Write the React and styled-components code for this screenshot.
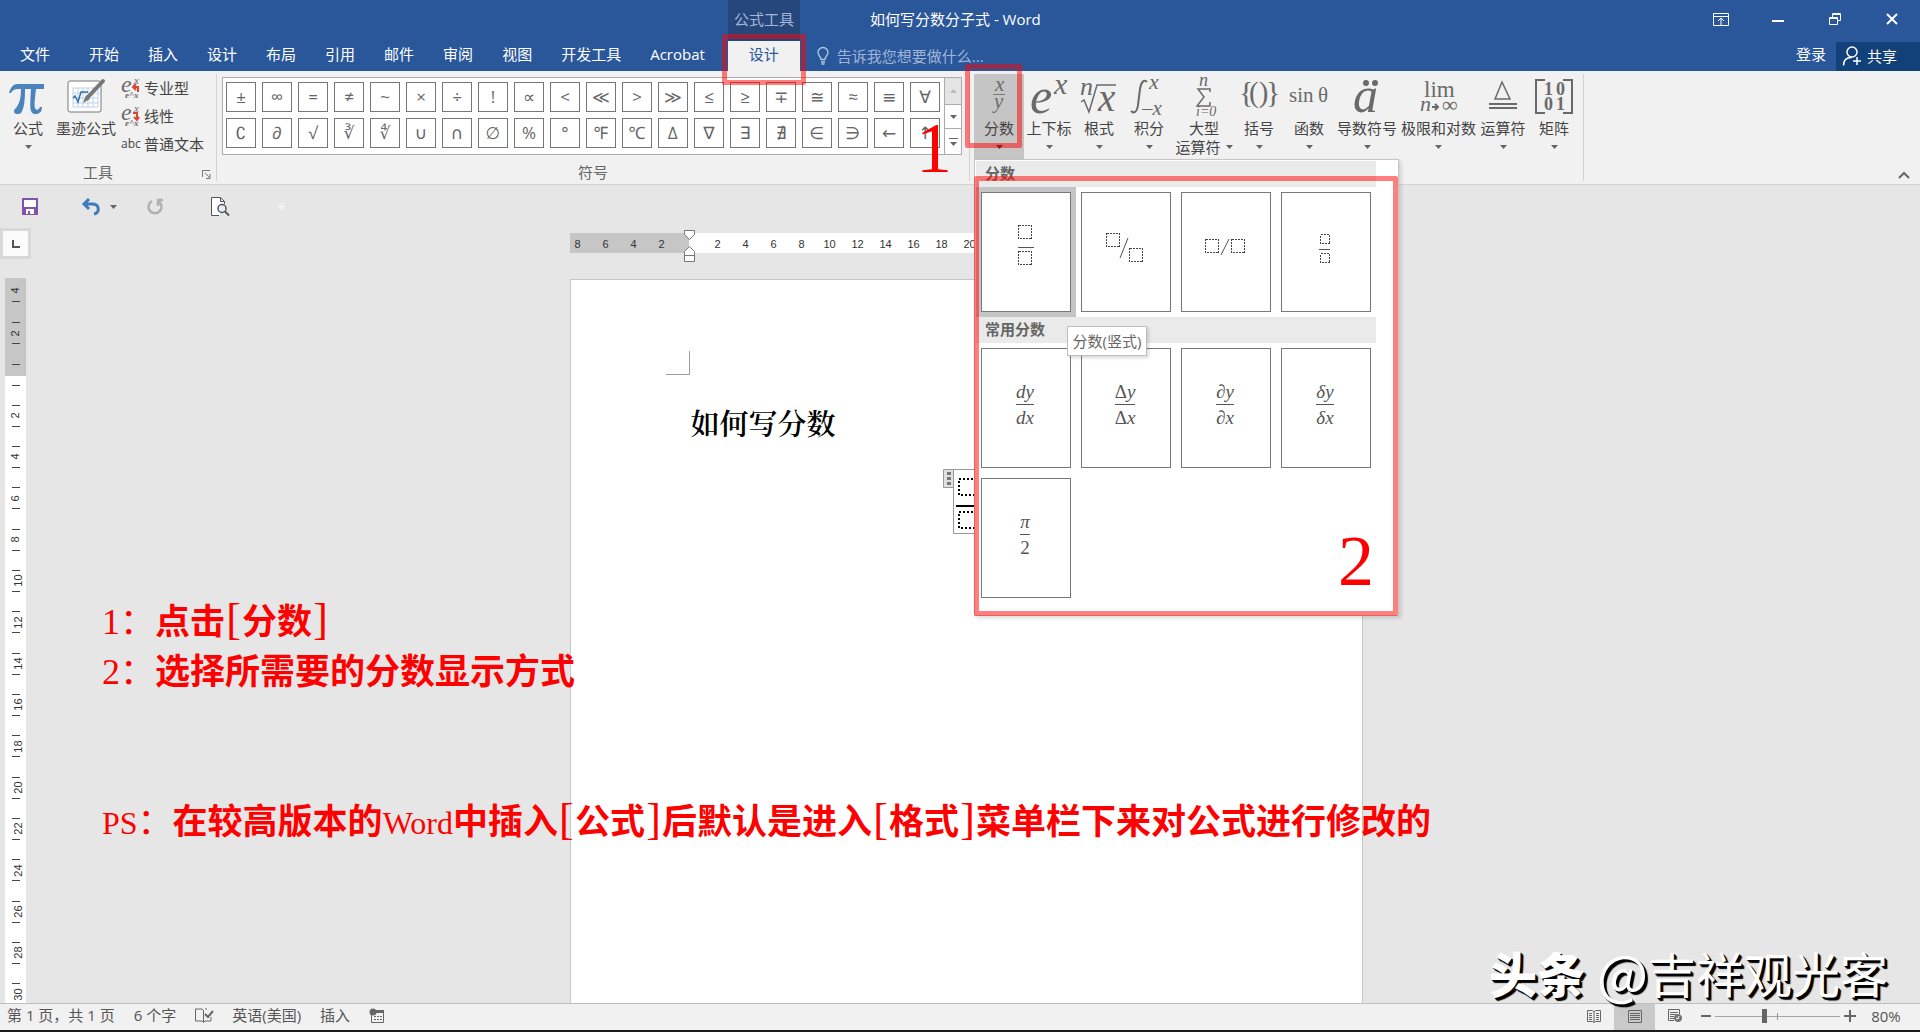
import React from "react";
import styled, { createGlobalStyle, css } from "styled-components";

const UI = `"Open Sans", "Noto Sans CJK SC", sans-serif`;
const MATH = `"Liberation Serif", "DejaVu Serif", serif`;

const Global = createGlobalStyle`
  * { box-sizing: border-box; }
  body { margin: 0; background: #e6e6e6; font: 15px/20px ${UI}; color: #444; }
  button, input { font: inherit; color: inherit; }
  button { border: 0; padding: 0; background: none; }
  svg { display: block; flex: none; overflow: visible; }
`;

const App = styled.div`
  position: relative;
  display: flex;
  flex-direction: column;
  height: 100vh;
  overflow: hidden;
`;

/* ---------- title bar and tabs ---------- */
const Header = styled.header`
  display: grid;
  grid-template-rows: 41px 30px;
  background: #2a579a;
  color: #fff;
`;
const TitleRow = styled.div`
  display: flex;
  align-items: flex-start;
`;
const ContextTitle = styled.div`
  width: 72px;
  height: 41px;
  margin-left: 728px;
  line-height: 39px;
  text-align: center;
  white-space: nowrap;
  background: #26477c;
  color: #a3b8da;
`;
const DocTitle = styled.h1`
  margin: 0 auto 0 70px;
  font-size: 15px;
  line-height: 38px;
  font-weight: 400;
`;
const WindowButtons = styled.div`
  display: flex;
`;
const WindowButton = styled.button`
  display: grid;
  place-items: center;
  width: 57px;
  height: 38px;
`;
const TabRow = styled.nav`
  display: flex;
  align-items: center;
`;
const Tab = styled.button`
  padding: 0 15px 4px 14px;
  white-space: nowrap;
  line-height: 26px;
`;
const FileTab = styled(Tab)`
  padding-left: 20px;
  padding-right: 25px;
`;
const ActiveTab = styled(Tab)`
  position: relative;
  width: 72px;
  height: 30px;
  margin-left: 8px;
  padding: 0 0 4px;
  background: #f1f1f1;
  color: #2a579a;
`;
const TellMe = styled.label`
  display: flex;
  flex: 1;
  align-items: center;
  gap: 8px;
  margin-left: 17px;
  input {
    width: 200px;
    padding: 0;
    border: 0;
    background: none;
    line-height: 28px;
  }
  input::placeholder { color: #9fb5d8; opacity: 1; }
`;
const Share = styled.button`
  display: flex;
  align-items: center;
  gap: 5px;
  width: 84px;
  height: 29px;
  padding-left: 6px;
  background: #124078;
`;
const SignIn = styled(Tab)`
  padding-right: 10px;
`;

const RedFrame = styled.span`
  position: absolute;
  z-index: 5;
  inset: ${(p) => p.$inset};
  border: 5px solid rgba(255, 0, 0, 0.5);
  border-radius: 2px;
  pointer-events: none;
`;

/* ---------- ribbon ---------- */
const Ribbon = styled.section`
  position: relative;
  z-index: 2;
  display: flex;
  height: 114px;
  padding-top: 3px;
  background: #f1f1f1;
  border-bottom: 1px solid #d2d2d2;
`;
const Group = styled.div`
  position: relative;
  display: flex;
  flex-direction: column;
  justify-content: space-between;
  height: 107px;
  border-right: 1px solid #d2d2d2;
  width: ${(p) => p.$w}px;
`;
const GroupBody = styled.div`
  display: flex;
`;
const GroupName = styled.div`
  text-align: center;
  line-height: 18px;
  color: #666;
  padding-right: ${(p) => p.$shift || 0}px;
`;
const Launcher = styled.button`
  position: absolute;
  right: 5px;
  bottom: 2px;
`;
const BigButton = styled.button`
  position: relative;
  display: flex;
  flex-direction: column;
  align-items: center;
  flex: none;
  width: ${(p) => p.$w}px;
  height: 85px;
  padding-top: 4px;
  white-space: nowrap;
  line-height: 18px;
  ${(p) => p.$on && css`background: #c5c5c5;`}
  > svg:first-child { margin-bottom: 3px; }
`;
const CaretRow = styled.span`
  display: flex;
  align-items: center;
  gap: 5px;
  height: 18px;
  margin-top: 1px;
`;
const SmallColumn = styled.div`
  display: flex;
  flex-direction: column;
  padding-left: 5px;
`;
const SmallButton = styled.button`
  display: flex;
  align-items: center;
  gap: 3px;
  height: 28px;
  padding-bottom: 1px;
  white-space: nowrap;
`;
const Abc = styled.span`
  width: 20px;
  font-size: 12px;
`;
const Gallery = styled.div`
  display: flex;
  width: 740px;
  height: 78px;
  margin: 3px 0 0 5px;
  background: #fff;
  border: 1px solid #ababab;
`;
const SymbolGrid = styled.div`
  display: grid;
  grid-template-columns: repeat(20, 30px);
  grid-auto-rows: 30px;
  gap: 6px;
  padding: 4px 3px;
`;
const SymbolButton = styled.button`
  border: 1px solid #777;
  font: 17px/26px "Open Sans", "Noto Sans", "DejaVu Sans", sans-serif;
  color: #666;
`;
const GalleryScroll = styled.div`
  display: grid;
  grid-template-rows: 1fr 24px 1fr;
  flex: 1;
  margin-left: 1px;
  border-left: 1px solid #ababab;
`;
const ScrollButton = styled.button`
  display: grid;
  place-items: center;
  background: ${(p) => (p.$off ? "#e4e4e4" : "#fff")};
  & + & { border-top: 1px solid #ababab; }
`;
const Structures = styled(GroupBody)`
  padding-left: 4px;
`;
const MenuAnchor = styled.div`
  position: relative;
`;
const Collapse = styled.button`
  margin: auto 10px 5px auto;
`;

/* ---------- fraction menu ---------- */
const Menu = styled.div`
  position: absolute;
  z-index: 3;
  top: 85px;
  left: 0;
  width: 425px;
  height: 457px;
  padding: 1px;
  background: #fff;
  border: 1px solid #c6c6c6;
  box-shadow: 2px 2px 4px rgba(0, 0, 0, 0.15);
`;
const MenuHeading = styled.h2`
  width: 400px;
  margin: 0;
  padding: 0 0 2px 9px;
  background: #eaeaea;
  font-size: 15px;
  line-height: 24px;
  font-weight: 700;
  color: #666;
`;
const MenuGrid = styled.div`
  display: grid;
  grid-template-columns: repeat(4, 100px);
  grid-auto-rows: 130px;
`;
const MenuCell = styled.button`
  padding: 5px;
  background: ${(p) => (p.$on ? "#c5c5c5" : "none")};
`;
const Card = styled.span`
  display: flex;
  align-items: center;
  justify-content: center;
  width: 90px;
  height: 120px;
  padding: ${(p) => (p.$text ? "0 2px 8px 0" : 0)};
  background: #fff;
  border: 1px solid #777;
`;
const Fraction = styled.span`
  display: flex;
  flex-direction: column;
  font: italic 19px/25px ${MATH};
  color: #555;
  text-align: center;
  > span + span { border-top: 1px solid #555; }
`;
const Upright = styled.span`
  font-style: normal;
`;
const Tooltip = styled.div`
  position: absolute;
  top: 166px;
  left: 92px;
  width: 80px;
  height: 30px;
  line-height: 29px;
  text-align: center;
  white-space: nowrap;
  background: #fff;
  border: 1px solid #bebebe;
  box-shadow: 2px 2px 3px rgba(0, 0, 0, 0.15);
  color: #666;
`;
const BigDigit = styled.span`
  position: absolute;
  z-index: 6;
  font: 72px/72px ${MATH};
  color: #f00;
  pointer-events: none;
`;
const StepOne = styled(BigDigit)`
  right: 17px;
  top: 38px;
`;
const StepTwo = styled(BigDigit)`
  right: 24px;
  bottom: 18px;
`;

/* ---------- work area ---------- */
const QuickAccess = styled.div`
  display: flex;
  align-items: center;
  height: 43px;
  padding-left: 21px;
`;
const QuickButton = styled.button`
  display: flex;
  align-items: center;
  gap: 9px;
  margin-right: ${(p) => p.$gap}px;
`;
const RulerRow = styled.div`
  display: flex;
  align-items: flex-start;
  height: 50px;
`;
const TabSelector = styled.button`
  display: grid;
  place-items: center;
  width: 31px;
  height: 31px;
  background: #fbfbfb;
  border: 3px solid #d9d9d9;
`;
const Centered = styled.div`
  flex: 1;
  display: flex;
  justify-content: center;
  padding-right: 19px;
`;
const HRuler = styled.div`
  position: relative;
  display: flex;
  width: 793px;
  height: 20px;
  margin-top: 5px;
  background: #fff;
  font: 11px/22px "Liberation Sans", sans-serif;
  color: #333;
`;
const RulerMargin = styled.div`
  display: flex;
  justify-content: flex-end;
  width: 119px;
  padding-right: 13px;
  overflow: hidden;
  background: #c6c6c6;
`;
const RulerText = styled.div`
  display: flex;
  padding-left: 15px;
`;
const RulerNumber = styled.span`
  flex: none;
  width: 28px;
  text-align: center;
`;
const IndentMarks = styled.svg`
  position: absolute;
  top: -3px;
  left: 114px;
`;
const Body = styled.main`
  flex: 1;
  display: flex;
  min-height: 0;
  overflow: hidden;
`;
const VRuler = styled.div`
  flex: none;
  width: 21px;
  margin: 0 5px;
  background: #fff;
  overflow: hidden;
  font: 11px/11px "Liberation Sans", sans-serif;
  color: #333;
`;
const VMargin = styled.div`
  display: flex;
  flex-direction: column;
  align-items: center;
  gap: 20px;
  height: 98px;
  padding-top: 2px;
  background: #c6c6c6;
`;
const VTick = styled.div`
  width: 8px;
  height: 1px;
  background: #444;
`;
const VOrigin = styled.div`
  display: flex;
  justify-content: center;
  padding: 9px 0;
`;
const VScale = styled.div`
  display: grid;
  grid-template-rows: repeat(15, 1fr);
  place-items: center;
  height: 620px;
`;
const VMark = styled.div`
  display: grid;
  place-items: center;
  width: 8px;
  height: 22px;
  border: solid #444;
  border-width: ${(p) => (p.$open ? "0 0 1px" : "1px 0")};
  span { transform: rotate(-90deg); }
`;
const Page = styled.article`
  position: relative;
  width: 793px;
  margin-top: 1px;
  padding: 125px 120px 0 120px;
  background: #fff;
  border: 1px solid #c6c6c6;
  border-bottom: 0;
`;
const PageTitle = styled.h2`
  margin: 0;
  font: 600 29px/36px "Noto Serif CJK SC", "Noto Sans CJK SC", serif;
  color: #000;
`;
const MarginCorner = styled.div`
  position: absolute;
  top: 71px;
  left: 95px;
  width: 24px;
  height: 24px;
  border: solid #a0a0a0;
  border-width: 0 1px 1px 0;
`;
const Equation = styled.div`
  display: flex;
  justify-content: center;
  margin-top: 28px;
  padding-left: 3px;
`;

/* ---------- notes ---------- */
const Notes = styled.div`
  position: absolute;
  z-index: 1;
  top: 594px;
  left: 102px;
  font: 700 35px/50px "Noto Sans CJK SC", sans-serif;
  color: #f00;
  white-space: nowrap;
  p { margin: 0; height: 50px; }
  p:last-child { margin-top: 100px; }
`;
const Digit = styled.span`
  font: 400 36px/50px "Liberation Serif", serif;
`;
const Latin = styled.span`
  font: 400 32px/50px "Liberation Serif", serif;
`;
const Colon = styled.span`
  font-weight: 400;
`;
const Bracket = styled.span`
  display: inline-block;
  width: 17px;
  font: 400 44px/50px "Liberation Serif", serif;
  text-align: center;
`;
const Watermark = styled.div`
  position: absolute;
  z-index: 4;
  right: 32px;
  bottom: 32px;
  display: flex;
  font: 400 48px/56px "Noto Sans CJK SC", sans-serif;
  color: #fff;
  text-shadow: 1px 1px 0 #000, 2px 2px 0 #000, 3px 3px 1px #000;
  b { margin-right: 12px; font-weight: 900; }
`;
const AtSign = styled.span`
  font-size: 54px;
`;

/* ---------- status bar ---------- */
const Status = styled.footer`
  display: flex;
  align-items: center;
  height: 29px;
  padding-left: 7px;
  background: #f1f1f1;
  border-top: 1px solid #bdbdbd;
  border-bottom: 2px solid #1d1a1e;
  color: #555;
  white-space: nowrap;
`;
const StatusItem = styled.button`
  margin-right: 19px;
  padding-bottom: 3px;
  line-height: 23px;
`;
const ViewButton = styled.button`
  display: grid;
  place-items: center;
  width: 41px;
  height: 26px;
  padding-bottom: 2px;
  background: ${(p) => (p.$on ? "#c9c9c9" : "none")};
`;
const Spacer = styled.span`
  flex: 1;
`;
const ZoomControl = styled.div`
  display: flex;
  align-items: center;
  margin-left: 5px;
  padding-bottom: 2px;
`;
const ZoomSlider = styled.input`
  appearance: none;
  width: 125px;
  height: 14px;
  margin: 0 4px;
  background:
    linear-gradient(#999, #999) 62px 4px / 1px 7px no-repeat,
    linear-gradient(#a6a6a6, #a6a6a6) 0 7px / 100% 1px no-repeat;
  &::-webkit-slider-thumb {
    appearance: none;
    width: 5px;
    height: 14px;
    background: #666;
  }
`;
const ZoomValue = styled.button`
  width: 64px;
  padding-right: 4px;
  text-align: center;
`;

const Caret = ({ c = "#666" }) => (
  <svg width="7" height="4" viewBox="0 0 7 4"><path d="M0 0h7L3.500 4z" fill={c} /></svg>
);

const T = ({ x, y, s, children, up, b }) => (
  <text x={x} y={y} fontSize={s} fontFamily={MATH} fontStyle={up ? "normal" : "italic"} fontWeight={b ? 700 : 400} fill="#6a6a6a">
    {children}
  </text>
);
const Icon = ({ w = 40, children }) => (
  <svg width={w} height="38" viewBox={`0 0 ${w} 38`}>{children}</svg>
);

const structureIcons = {
  frac: <Icon><T x="16" y="13" s="21">x</T><path d="M14 16.500h12" stroke="#777" /><T x="15" y="30" s="21">y</T></Icon>,
  script: <Icon w={48}><T x="5" y="35" s="50">e</T><T x="29" y="16" s="30">x</T></Icon>,
  root: <Icon w={44}><T x="3" y="17" s="26">n</T><path d="M4 24l3-2 5 12L20 7h19" fill="none" stroke="#6a6a6a" strokeWidth="1.500" /><T x="21" y="33" s="39">x</T></Icon>,
  integral: <Icon><path d="M18 4c-3-3-6 0-7 7l-2 16c-1 7-4 9-7 6" fill="none" stroke="#6a6a6a" strokeWidth="2" /><T x="20" y="11" s="22">x</T><T x="13" y="37" s="21">–x</T></Icon>,
  sum: <Icon><T x="15" y="8" s="18">n</T><path d="M26 14v-3H14l6 8-7 9h13v-4" fill="none" stroke="#6a6a6a" strokeWidth="1.500" /><T x="12" y="38" s="14">i=0</T></Icon>,
  bracket: <Icon w={44}><T x="2" y="24" s="30" up>{"{"}</T><T x="12" y="24" s="29" up>()</T><T x="29" y="24" s="30" up>{"}"}</T></Icon>,
  func: <Icon w={44}><T x="2" y="24" s="21" up>sin</T><T x="31" y="24" s="21" up>θ</T></Icon>,
  accent: <Icon><T x="6" y="34" s="50">a</T><circle cx="19" cy="5" r="3" fill="#6a6a6a" /><circle cx="28" cy="5" r="3" fill="#6a6a6a" /></Icon>,
  limit: <Icon><T x="5" y="19" s="23" up>lim</T><T x="1" y="33" s="22">n</T><path d="M13 29h6M16 26l3 3-3 3" fill="none" stroke="#6a6a6a" strokeWidth="2" /><T x="23" y="34" s="22" up>∞</T></Icon>,
  operator: <Icon><path d="M12 21L19 4l8 17z" fill="none" stroke="#6a6a6a" strokeWidth="1.500" /><path d="M6 26h28M6 30h28" stroke="#6a6a6a" strokeWidth="2" /></Icon>,
  matrix: <Icon><path d="M11 2H2v33h9M29 2h9v33h-9" fill="none" stroke="#6a6a6a" strokeWidth="2" /><T x="10" y="17" s="18" up b>1</T><T x="22" y="17" s="18" up b>0</T><T x="10" y="32" s="18" up b>0</T><T x="22" y="32" s="18" up b>1</T></Icon>,
};

const structures = [
  ["script", "上下标", 50], ["root", "根式", 50], ["integral", "积分", 50],
  ["sum", "大型", 60, "运算符"], ["bracket", "括号", 50], ["func", "函数", 50],
  ["accent", "导数符号", 66], ["limit", "极限和对数", 77], ["operator", "运算符", 52], ["matrix", "矩阵", 50],
];
const symbols = [..."±∞=≠~×÷!∝<≪>≫≤≥∓≅≈≡∀∁∂√∛∜∪∩∅%°℉℃∆∇∃∄∈∋←↑"];
const tabs = ["开始", "插入", "设计", "布局", "引用", "邮件", "审阅", "视图", "开发工具", "Acrobat"];

const Slot = ({ x, y, s = 13 }) => (
  <rect x={x + 0.5} y={y + 0.5} width={s} height={s} fill="none" stroke="#444" strokeDasharray="2 1" shapeRendering="crispEdges" />
);
const placeholders = [
  ["分数(竖式)", <><Slot x={36} y={32} /><path d="M36 54.500h16" stroke="#555" /><Slot x={36} y={58} /></>],
  ["分数(斜式)", <><Slot x={24} y={40} /><path d="M46 45l-8 20" stroke="#555" /><Slot x={47} y={55} /></>],
  ["分数(横式)", <><Slot x={23} y={46} /><path d="M47 46l-8 16" stroke="#555" /><Slot x={49} y={46} /></>],
  ["分数(小型)", <><Slot x={38} y={41} s={9} /><path d="M37 56.500h11" stroke="#555" /><Slot x={38} y={60} s={9} /></>],
];
const common = [
  ["dy", "dx"],
  [<><Upright>Δ</Upright>y</>, <><Upright>Δ</Upright>x</>],
  ["∂y", "∂x"],
  ["δy", "δx"],
  ["π", <Upright>2</Upright>],
];

const ConvertIcon = ({ down }) => (
  <svg width="20" height="20" viewBox="0 0 20 20">
    <T x="0" y="14" s="24">e</T>
    <T x="13" y="6" s="11">x</T>
    <T x="4" y="20" s="9" b>e^x</T>
    <path d={down ? "M12 7h4v6M13 11l3 3 2-3" : "M17 14V9h-4M15 6L12 9l3 3"} fill="none" stroke="#d8472b" strokeWidth="2" />
  </svg>
);

export default function WordWindow() {
  return (
    <App>
      <Global />
      <Header>
        <TitleRow>
          <ContextTitle>公式工具</ContextTitle>
          <DocTitle>如何写分数分子式 - Word</DocTitle>
          <WindowButtons>
            <WindowButton aria-label="功能区显示选项"><svg width="16" height="13" fill="none" stroke="#fff"><path d="M.5.500h15v12H.5zM.5 3.500h15M8 12V5.500M5 8l3-3 3 3" /></svg></WindowButton>
            <WindowButton aria-label="最小化"><svg width="12" height="8"><path d="M0 6h12" stroke="#fff" strokeWidth="2" /></svg></WindowButton>
            <WindowButton aria-label="还原"><svg width="12" height="12" fill="none" stroke="#fff"><path d="M.5 4.500h8v7h-8zM.5 5.500h8M3.500 4V.500h8v7H9M3.500 1.500h8" /></svg></WindowButton>
            <WindowButton aria-label="关闭"><svg width="12" height="12"><path d="M1 1l10 10M11 1L1 11" stroke="#fff" strokeWidth="2" /></svg></WindowButton>
          </WindowButtons>
        </TitleRow>
        <TabRow>
          <FileTab>文件</FileTab>
          {tabs.map((t) => <Tab key={t}>{t}</Tab>)}
          <ActiveTab>设计<RedFrame $inset="-7px -6px -14px -6px" /></ActiveTab>
          <TellMe>
            <svg width="12" height="18" fill="none" stroke="#b5c7e3" strokeWidth="1.300"><path d="M4 12.500c0-3-3-4-3-7a5 5 0 0 1 10 0c0 3-3 4-3 7zM4 15h4M4.500 17h3" /></svg>
            <input aria-label="告诉我" placeholder="告诉我您想要做什么..." />
          </TellMe>
          <SignIn>登录</SignIn>
          <Share>
            <svg width="20" height="20" fill="none" stroke="#fff" strokeWidth="1.500"><circle cx="10" cy="6" r="5" /><path d="M1.500 19.500c0-5 3-8 8-8M15 11v8M11 15h8" /></svg>
            共享
          </Share>
        </TabRow>
      </Header>

      <Ribbon>
        <Group $w={217}>
          <GroupBody>
            <BigButton $w={56}>
              <Icon><path d="M1 15C3 9 5 6 10 6h26v5h-8c-1 9-2 15-1 19 1 3 4 2 5-1h2c0 5-3 7-6 7-7 0-6-7-5-25h-6c0 12-1 18-3 22-1 3-3 3-5 3-3 0-4-3-2-5 4-4 6-10 6-20-5 0-8 0-10 4z" fill="#4a83bd" /></Icon>
              公式
              <CaretRow><Caret /></CaretRow>
            </BigButton>
            <BigButton $w={60}>
              <Icon><rect x="2" y="3" width="33" height="31" rx="2" fill="#fff" stroke="#777" /><path d="M7 10h25v19H7zM12 10v19M17 10v19M22 10v19M27 10v19M7 15h25M7 20h25M7 25h25" fill="none" stroke="#bcd3ea" /><path d="M7 20l2-2 3 6 3-10h7" fill="none" stroke="#2f6fb0" strokeWidth="1.500" /><path d="M37 3L22 19" stroke="#777" strokeWidth="4" strokeLinecap="round" /><path d="M20 17l4 4-7 4z" fill="#777" /></Icon>
              墨迹公式
            </BigButton>
            <SmallColumn>
              <SmallButton><ConvertIcon />专业型</SmallButton>
              <SmallButton><ConvertIcon down />线性</SmallButton>
              <SmallButton><Abc>abc</Abc>普通文本</SmallButton>
            </SmallColumn>
          </GroupBody>
          <GroupName $shift={20}>工具</GroupName>
          <Launcher aria-label="工具选项"><svg width="9" height="9" fill="none" stroke="#777"><path d="M.5 7V.500H8M3 3l5 5M8 4v4.500H4" /></svg></Launcher>
        </Group>

        <Group $w={753}>
          <Gallery>
            <SymbolGrid>
              {symbols.map((s) => <SymbolButton key={s}>{s}</SymbolButton>)}
            </SymbolGrid>
            <GalleryScroll>
              <ScrollButton $off aria-label="上一行"><svg width="7" height="4"><path d="M0 4h7L3.500 0z" fill="#bbb" /></svg></ScrollButton>
              <ScrollButton aria-label="下一行"><Caret /></ScrollButton>
              <ScrollButton aria-label="其他"><svg width="9" height="8"><path d="M0 .500h9" stroke="#666" /><path d="M1 4h7L4.500 8z" fill="#666" /></svg></ScrollButton>
            </GalleryScroll>
          </Gallery>
          <GroupName>符号</GroupName>
          <StepOne>1</StepOne>
        </Group>

        <Group $w={614}>
          <Structures>
            <MenuAnchor>
              <BigButton $w={50} $on>
                {structureIcons.frac}
                分数
                <CaretRow><Caret c="#333" /></CaretRow>
              </BigButton>
              <RedFrame $inset="-10px 2px 11px -9px" />
              <Menu>
                <MenuHeading>分数</MenuHeading>
                <MenuGrid>
                  {placeholders.map(([name, art], i) => (
                    <MenuCell key={name} $on={i === 0} aria-label={name}>
                      <Card><svg width="88" height="118" viewBox="0 0 88 118">{art}</svg></Card>
                    </MenuCell>
                  ))}
                </MenuGrid>
                <MenuHeading>常用分数</MenuHeading>
                <MenuGrid>
                  {common.map(([n, d], i) => (
                    <MenuCell key={i}>
                      <Card $text><Fraction><span>{n}</span><span>{d}</span></Fraction></Card>
                    </MenuCell>
                  ))}
                </MenuGrid>
                <Tooltip>分数(竖式)</Tooltip>
                <StepTwo>2</StepTwo>
                <RedFrame $inset="16px 0 -1px -1px" />
              </Menu>
            </MenuAnchor>
            {structures.map(([icon, label, w, second]) => (
              <BigButton key={icon} $w={w}>
                {structureIcons[icon]}
                {label}
                <CaretRow>{second}<Caret /></CaretRow>
              </BigButton>
            ))}
          </Structures>
        </Group>
        <Collapse aria-label="折叠功能区"><svg width="12" height="8"><path d="M1 7l5-5 5 5" fill="none" stroke="#666" strokeWidth="2" /></svg></Collapse>
      </Ribbon>

      <QuickAccess>
        <QuickButton $gap={42} aria-label="保存"><svg width="18" height="17"><path d="M1 0h16v17H1z" fill="#8153ab" /><path d="M3 2h12v7H3zM5 11h8v5H5z" fill="#fff" /><path d="M7 13h2v3H7z" fill="#8153ab" /></svg></QuickButton>
        <QuickButton $gap={29} aria-label="撤消">
          <svg width="20" height="17" fill="none" stroke="#3f7cbb" strokeWidth="3"><path d="M3 6h8c8 0 8 9 2 10M8 1L3 6l5 5" /></svg>
          <Caret />
        </QuickButton>
        <QuickButton $gap={46} aria-label="重复"><svg width="18" height="17" fill="none" stroke="#b0b0b0" strokeWidth="2.500"><path d="M6 3a6.500 6.500 0 1 0 6 0M12 8V2h5" /></svg></QuickButton>
        <QuickButton $gap={48} aria-label="打印预览"><svg width="20" height="20" fill="none" stroke="#555"><path d="M9 18.500H1.500v-18h9l4 4V7" fill="#fff" /><path d="M10.500.500v4h4" /><circle cx="12" cy="11.500" r="4" fill="#e6f0fa" strokeWidth="1.500" /><path d="M15 14.500l4 4" strokeWidth="2" /></svg></QuickButton>
        <QuickButton $gap={0} aria-label="自定义快速访问工具栏"><svg width="7" height="7"><path d="M0 .500h7M0 3h7L3.500 7z" fill="#f2f2f2" stroke="#f2f2f2" /></svg></QuickButton>
      </QuickAccess>

      <RulerRow>
        <TabSelector aria-label="制表符"><svg width="8" height="8"><path d="M1 0v7h7" fill="none" stroke="#555" strokeWidth="2" /></svg></TabSelector>
        <Centered>
          <HRuler>
            <RulerMargin>{[8, 6, 4, 2].map((n) => <RulerNumber key={n}>{n}</RulerNumber>)}</RulerMargin>
            <RulerText>{[2, 4, 6, 8, 10, 12, 14, 16, 18, 20].map((n) => <RulerNumber key={n}>{n}</RulerNumber>)}</RulerText>
            <IndentMarks width="12" height="33" fill="#fff" stroke="#777"><path d="M.5.500h10v4l-5 5-5-5zM5.500 16.500l5 5v10H.5v-10zM.5 25.500h10" /></IndentMarks>
          </HRuler>
        </Centered>
      </RulerRow>

      <Body>
        <VRuler>
          <VMargin>
            <VMark $open><span>4</span></VMark>
            <VMark><span>2</span></VMark>
            <VTick />
          </VMargin>
          <VOrigin><VTick /></VOrigin>
          <VScale>
            {Array.from({ length: 15 }, (_, i) => <VMark key={i}><span>{i * 2 + 2}</span></VMark>)}
          </VScale>
        </VRuler>
        <Centered>
          <Page>
            <MarginCorner />
            <PageTitle>如何写分数</PageTitle>
            <Equation>
              <svg width="50" height="66" fill="none">
                <path d="M.5.500h10v18H.5z" fill="#e0e0e0" stroke="#999" />
                <path d="M4 3h4v3H4zM4 8h4v3H4zM4 13h4v3H4z" fill="#777" />
                <path d="M10.500.500h38v64h-38z" stroke="#999" />
                <path d="M16 10h16v16H16zM16 43h16v16H16z" stroke="#000" strokeWidth="2" strokeDasharray="2 2" />
                <path d="M13 37h24" stroke="#000" strokeWidth="2" />
              </svg>
            </Equation>
          </Page>
        </Centered>
      </Body>

      <Notes>
        <p><Digit>1</Digit><Colon>：</Colon>点击<Bracket>[</Bracket>分数<Bracket>]</Bracket></p>
        <p><Digit>2</Digit><Colon>：</Colon>选择所需要的分数显示方式</p>
        <p><Latin>PS</Latin><Colon>：</Colon>在较高版本的<Latin>Word</Latin>中插入<Bracket>[</Bracket>公式<Bracket>]</Bracket>后默认是进入<Bracket>[</Bracket>格式<Bracket>]</Bracket>菜单栏下来对公式进行修改的</p>
      </Notes>
      <Watermark><b>头条</b><AtSign>@</AtSign><span>吉祥观光客</span></Watermark>

      <Status>
        <StatusItem>第 1 页，共 1 页</StatusItem>
        <StatusItem>6 个字</StatusItem>
        <StatusItem aria-label="校对"><svg width="18" height="15" fill="none" stroke="#666"><path d="M8.500 2.500L7 1H.5v12H7l1.500 1.500L10 13h6V9M8.500 2v12M10 1h2" /><path d="M10 6l3 3 5-6" strokeWidth="2" /></svg></StatusItem>
        <StatusItem>英语(美国)</StatusItem>
        <StatusItem>插入</StatusItem>
        <StatusItem aria-label="宏"><svg width="16" height="15"><path d="M2.500 6v8.500h12v-12H7" fill="none" stroke="#666" /><circle cx="4" cy="4" r="3.500" fill="#666" /><path d="M7 2h8v3H7z" fill="#666" /><path d="M5 8.500h8M5 11.500h8" stroke="#666" strokeDasharray="2 1" /></svg></StatusItem>
        <Spacer />
        <ViewButton aria-label="阅读视图"><svg width="14" height="13" fill="none" stroke="#666"><path d="M7 2L5.500 .500H.5v11h5L7 12.500l1.500-1h5V.500h-5zM7 2v10M2 3.500h3M2 5.500h3M2 7.500h3M2 9.500h3M9 3.500h3M9 5.500h3M9 7.500h3M9 9.500h3" /></svg></ViewButton>
        <ViewButton $on aria-label="页面视图"><svg width="14" height="13" fill="none" stroke="#666"><path d="M.5.500h13v12H.5zM2 3.500h10M2 5.500h10M2 7.500h10M2 9.500h10" /></svg></ViewButton>
        <ViewButton aria-label="Web 版式视图"><svg width="15" height="14" fill="none" stroke="#666"><path d="M11.500 5V.500H.5v11H6M2 3.500h8M2 5.500h6M2 7.500h4M2 9.500h4" /><circle cx="10" cy="9" r="3.500" fill="#777" /><path d="M8 9l2 1 1-3" stroke="#fff" /></svg></ViewButton>
        <ZoomControl>
          <button aria-label="缩小"><svg width="10" height="12"><path d="M0 6h10" stroke="#666" strokeWidth="2" /></svg></button>
          <ZoomSlider type="range" aria-label="显示比例" min="0" max="100" defaultValue="39" />
          <button aria-label="放大"><svg width="12" height="12"><path d="M0 6h12M6 0v12" stroke="#666" strokeWidth="2" /></svg></button>
          <ZoomValue>80%</ZoomValue>
        </ZoomControl>
      </Status>
    </App>
  );
}
